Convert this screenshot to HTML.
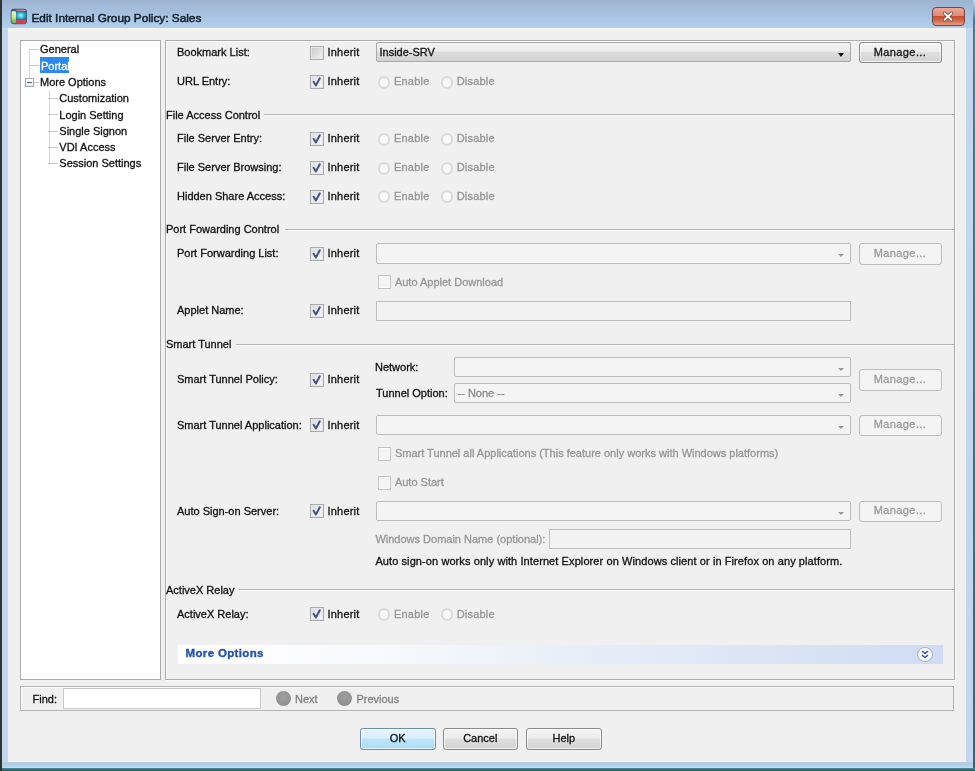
<!DOCTYPE html><html><head><meta charset="utf-8"><style>
html,body{margin:0;padding:0}
body{width:975px;height:771px;position:relative;overflow:hidden;background:#c2d7ee;font-family:"Liberation Sans",sans-serif}
div{position:absolute;box-sizing:border-box}
.t,.td,.tb{font-size:11px;line-height:13px;white-space:nowrap;color:#111;-webkit-text-stroke:0.3px currentColor}
.td{color:#969696}
.cb{width:13.5px;height:13.5px;border:1px solid #ababab;background:linear-gradient(135deg,#d8dde6,#f6f9fd);box-shadow:inset 0 0 0 1px #e6e6e6}
.cbu{background:linear-gradient(135deg,#c6c6c6,#f6f6f6);border-color:#b0b0b0}
.cbd{border-color:#c4c4c4;background:#f4f4f4;box-shadow:inset 0 0 0 1px #fafafa}
.rd{width:12.5px;height:12.5px;border-radius:50%;border:2px solid #dadada;background:radial-gradient(circle at 50% 55%,#fbfbfb 0,#f6f6f6 60%,#ececec 100%)}
.cmb{border:1px solid #a9a9a9;border-radius:2px;background:linear-gradient(#f3f3f3,#ececec 45%,#dddddd 50%,#d2d2d2)}
.cmbd{border:1px solid #bdbdbd;border-radius:2px;background:#f4f4f4}
.ct,.ctd{position:absolute;left:3px;top:3px;font-size:11px;line-height:13px;color:#111;white-space:nowrap;-webkit-text-stroke:0.3px currentColor}
.ctd{color:#8a8a8a}
.arr{right:6px;top:10px;width:0;height:0;border-left:3.5px solid transparent;border-right:3.5px solid transparent;border-top:4px solid #111}
.arrd{right:6px;top:10px;width:0;height:0;border-left:3px solid transparent;border-right:3px solid transparent;border-top:3px solid #9a9a9a}
.tf{border:1px solid #bfbfbf;background:#f2f2f2}
.btn,.btnd,.ok{border:1px solid #8a8a8a;border-radius:3px;background:linear-gradient(#f4f4f4,#ececec 45%,#dedede 50%,#d3d3d3);box-shadow:inset 0 0 0 1px rgba(255,255,255,.7)}
.btnd{border-color:#bdbdbd;background:#f4f4f4;box-shadow:none}
.ok{border-color:#6a8fb0;background:linear-gradient(#e8f5fd,#d8effc 45%,#bfe5fb 50%,#a9daf5)}
.btn span,.btnd span,.ok span{position:absolute;left:0;right:0;top:50%;margin-top:-7px;text-align:center;font-size:11px;line-height:13px;color:#111;-webkit-text-stroke:0.3px currentColor}
.btnd span{color:#9a9a9a}
.sep{height:2px;border-top:1px solid #b4b4b4;border-bottom:1px solid #fafafa}
.tree{background:#fff;border:1px solid #ababab}
.tl{background:#c6c6c6}
</style></head><body><div style="left:0;top:0;width:975px;height:771px;filter:blur(0.4px)">
<div style="left:0;top:0;width:975px;height:28px;background:linear-gradient(#9db3d0,#a8c4e2 57%,#b0d0ee)"></div>
<div style="left:0;top:0;width:2px;height:771px;background:#2e3336"></div>
<div style="left:973px;top:0;width:2px;height:771px;background:linear-gradient(#c8d8e8,#4a7c84 20px,#47707a 50%,#4a5c6a)"></div>
<div style="left:2px;top:762px;width:971px;height:6px;background:linear-gradient(#b9cce0,#b0cde8 50%,#bde0f6)"></div>
<div style="left:2px;top:768px;width:973px;height:3px;background:linear-gradient(#4f8c98,#24525e)"></div>
<div style="left:8px;top:28px;width:958px;height:734px;background:linear-gradient(#f4f2ef,#f0f0f0 4px)"></div>
<svg style="position:absolute;left:10px;top:8px" width="18" height="17" viewBox="0 0 18 17">
<defs><radialGradient id="cy" cx="0.45" cy="0.45" r="0.6"><stop offset="0" stop-color="#9af4ff"/><stop offset="0.5" stop-color="#3cc0e0"/><stop offset="1" stop-color="#127a98"/></radialGradient>
<linearGradient id="gr" x1="0" y1="0" x2="0" y2="1"><stop offset="0" stop-color="#e6f0d8"/><stop offset="0.5" stop-color="#c8ec88"/><stop offset="1" stop-color="#6aa04a"/></linearGradient></defs>
<rect x="0.7" y="0.7" width="16.3" height="15.6" rx="3" fill="#505a78"/>
<rect x="1.6" y="3.2" width="4.6" height="12" rx="1.2" fill="url(#gr)"/>
<rect x="6.2" y="3.8" width="10" height="8" fill="url(#cy)"/>
<rect x="6.2" y="11.8" width="9.8" height="4" rx="1" fill="#d2404c"/>
<rect x="6.5" y="1.8" width="9" height="1.2" fill="#c88898"/>
</svg>
<div class="t" style="left:31.5px;top:10.5px;font-size:11.8px;line-height:14px;color:#141e2c;-webkit-text-stroke:0.5px #141e2c">Edit Internal Group Policy: Sales</div>
<div style="left:932px;top:7px;width:33px;height:19px;border:1px solid #6e4a4a;border-radius:4px;background:linear-gradient(#eaa898,#e08a78 45%,#c9502e 50%,#d66a4a 75%,#e89a80)"></div>
<svg style="position:absolute;left:941px;top:10px" width="14" height="13" viewBox="0 0 14 13"><path d="M3.5 3.2 L10.5 9.8 M10.5 3.2 L3.5 9.8" stroke="#6a3a30" stroke-width="3.4" stroke-linecap="round"/><path d="M3.5 3.2 L10.5 9.8 M10.5 3.2 L3.5 9.8" stroke="#ffffff" stroke-width="2" stroke-linecap="round"/></svg>
<div class="tree" style="left:20px;top:40px;width:141px;height:640px;"></div>
<div class="tl" style="left:29px;top:49px;width:1.2px;height:29px;background:#d6d6d6"></div>
<div class="tl" style="left:29px;top:49px;width:10px;height:1px"></div>
<div class="tl" style="left:29px;top:65px;width:10px;height:1px"></div>
<div style="left:25px;top:78px;width:9px;height:9px;border:1px solid #a6acb4;background:linear-gradient(#fff,#e4e6ea)"></div>
<div style="left:27px;top:82px;width:5px;height:1px;background:#5a6272"></div>
<div class="tl" style="left:34px;top:82px;width:5px;height:1px"></div>
<div class="t" style="left:40px;top:43.0px;">General</div>
<div style="left:40px;top:57px;width:29px;height:16px;background:#2a88ee"></div>
<div class="t" style="left:41px;top:59.5px;color:#fff">Portal</div>
<div class="t" style="left:40px;top:76.0px;">More Options</div>
<div class="tl" style="left:48.5px;top:90px;width:1.2px;height:75px;background:#d6d6d6"></div>
<div class="tl" style="left:48px;top:98px;width:10px;height:1px"></div>
<div class="t" style="left:59.3px;top:92.3px;">Customization</div>
<div class="tl" style="left:48px;top:114px;width:10px;height:1px"></div>
<div class="t" style="left:59.3px;top:108.5px;">Login Setting</div>
<div class="tl" style="left:48px;top:131px;width:10px;height:1px"></div>
<div class="t" style="left:59.3px;top:124.7px;">Single Signon</div>
<div class="tl" style="left:48px;top:147px;width:10px;height:1px"></div>
<div class="t" style="left:59.3px;top:140.9px;">VDI Access</div>
<div class="tl" style="left:48px;top:163px;width:10px;height:1px"></div>
<div class="t" style="left:59.3px;top:157.1px;">Session Settings</div>
<div class="" style="left:165px;top:40px;width:790px;height:640px;border:1px solid #acacac;box-shadow:inset 1px 1px 0 #fcfcfc,1px 1px 0 #fafafa"></div>
<div class="t" style="left:177px;top:46.4px;">Bookmark List:</div>
<div class="cb cbu" style="left:310px;top:46px"></div>
<div class="t" style="left:327.5px;top:46.4px;letter-spacing:0.2px">Inherit</div>
<div class="cmb" style="left:375.5px;top:42px;width:475.5px;height:20px;"><span class="ct">Inside-SRV</span><div class="arr"></div></div>
<div class="btn" style="left:858.5px;top:42px;width:83.0px;height:21px;"><span style="letter-spacing:0.4px">Manage...</span></div>
<div class="t" style="left:177px;top:75.0px;">URL Entry:</div>
<div class="cb" style="left:310px;top:75px"><svg width="13" height="13" viewBox="0 0 13 13" style="position:absolute;left:-1px;top:-1px"><path d="M3.6 6.8 L5.9 10.4 L9.8 3.3" fill="none" stroke="#48527e" stroke-width="2" stroke-linecap="round" stroke-linejoin="round"/></svg></div>
<div class="t" style="left:327.5px;top:75.0px;letter-spacing:0.2px">Inherit</div>
<div class="rd" style="left:377.5px;top:76px"></div>
<div class="td" style="left:394px;top:75.0px;letter-spacing:0.2px">Enable</div>
<div class="rd" style="left:440.5px;top:76px"></div>
<div class="td" style="left:456.7px;top:75.0px;letter-spacing:0.2px">Disable</div>
<div class="t" style="left:166px;top:109.2px;">File Access Control</div>
<div class="sep" style="left:264px;top:114px;width:690px"></div>
<div class="t" style="left:177px;top:132.3px;">File Server Entry:</div>
<div class="cb" style="left:310px;top:132px"><svg width="13" height="13" viewBox="0 0 13 13" style="position:absolute;left:-1px;top:-1px"><path d="M3.6 6.8 L5.9 10.4 L9.8 3.3" fill="none" stroke="#48527e" stroke-width="2" stroke-linecap="round" stroke-linejoin="round"/></svg></div>
<div class="t" style="left:327.5px;top:132.3px;letter-spacing:0.2px">Inherit</div>
<div class="rd" style="left:377.5px;top:133px"></div>
<div class="td" style="left:394px;top:132.3px;letter-spacing:0.2px">Enable</div>
<div class="rd" style="left:440.5px;top:133px"></div>
<div class="td" style="left:456.7px;top:132.3px;letter-spacing:0.2px">Disable</div>
<div class="t" style="left:177px;top:161.0px;">File Server Browsing:</div>
<div class="cb" style="left:310px;top:161px"><svg width="13" height="13" viewBox="0 0 13 13" style="position:absolute;left:-1px;top:-1px"><path d="M3.6 6.8 L5.9 10.4 L9.8 3.3" fill="none" stroke="#48527e" stroke-width="2" stroke-linecap="round" stroke-linejoin="round"/></svg></div>
<div class="t" style="left:327.5px;top:161.0px;letter-spacing:0.2px">Inherit</div>
<div class="rd" style="left:377.5px;top:162px"></div>
<div class="td" style="left:394px;top:161.0px;letter-spacing:0.2px">Enable</div>
<div class="rd" style="left:440.5px;top:162px"></div>
<div class="td" style="left:456.7px;top:161.0px;letter-spacing:0.2px">Disable</div>
<div class="t" style="left:177px;top:190.0px;">Hidden Share Access:</div>
<div class="cb" style="left:310px;top:190px"><svg width="13" height="13" viewBox="0 0 13 13" style="position:absolute;left:-1px;top:-1px"><path d="M3.6 6.8 L5.9 10.4 L9.8 3.3" fill="none" stroke="#48527e" stroke-width="2" stroke-linecap="round" stroke-linejoin="round"/></svg></div>
<div class="t" style="left:327.5px;top:190.0px;letter-spacing:0.2px">Inherit</div>
<div class="rd" style="left:377.5px;top:190px"></div>
<div class="td" style="left:394px;top:190.0px;letter-spacing:0.2px">Enable</div>
<div class="rd" style="left:440.5px;top:190px"></div>
<div class="td" style="left:456.7px;top:190.0px;letter-spacing:0.2px">Disable</div>
<div class="t" style="left:166px;top:223.0px;">Port Fowarding Control</div>
<div class="sep" style="left:285px;top:229px;width:669px"></div>
<div class="t" style="left:177px;top:247.4px;">Port Forwarding List:</div>
<div class="cb" style="left:310px;top:247px"><svg width="13" height="13" viewBox="0 0 13 13" style="position:absolute;left:-1px;top:-1px"><path d="M3.6 6.8 L5.9 10.4 L9.8 3.3" fill="none" stroke="#48527e" stroke-width="2" stroke-linecap="round" stroke-linejoin="round"/></svg></div>
<div class="t" style="left:327.5px;top:247.4px;letter-spacing:0.2px">Inherit</div>
<div class="cmbd" style="left:375.5px;top:243px;width:475.5px;height:20.5px;"><div class="arrd"></div></div>
<div class="btnd" style="left:858.5px;top:243px;width:83.0px;height:22px;"><span style="letter-spacing:0.4px">Manage...</span></div>
<div class="cb cbd" style="left:377.5px;top:275px"></div>
<div class="td" style="left:394.9px;top:276.0px;">Auto Applet Download</div>
<div class="t" style="left:177px;top:304.3px;">Applet Name:</div>
<div class="cb" style="left:310px;top:304px"><svg width="13" height="13" viewBox="0 0 13 13" style="position:absolute;left:-1px;top:-1px"><path d="M3.6 6.8 L5.9 10.4 L9.8 3.3" fill="none" stroke="#48527e" stroke-width="2" stroke-linecap="round" stroke-linejoin="round"/></svg></div>
<div class="t" style="left:327.5px;top:304.3px;letter-spacing:0.2px">Inherit</div>
<div class="tf" style="left:375.5px;top:300.5px;width:475.5px;height:20.5px;"></div>
<div class="t" style="left:166px;top:338.4px;">Smart Tunnel</div>
<div class="sep" style="left:236px;top:344px;width:718px"></div>
<div class="t" style="left:177px;top:373.4px;">Smart Tunnel Policy:</div>
<div class="cb" style="left:310px;top:373px"><svg width="13" height="13" viewBox="0 0 13 13" style="position:absolute;left:-1px;top:-1px"><path d="M3.6 6.8 L5.9 10.4 L9.8 3.3" fill="none" stroke="#48527e" stroke-width="2" stroke-linecap="round" stroke-linejoin="round"/></svg></div>
<div class="t" style="left:327.5px;top:373.4px;letter-spacing:0.2px">Inherit</div>
<div class="t" style="left:375px;top:361.0px;">Network:</div>
<div class="cmbd" style="left:453.5px;top:357px;width:397.5px;height:20px;"><div class="arrd"></div></div>
<div class="t" style="left:376px;top:386.8px;">Tunnel Option:</div>
<div class="cmbd" style="left:453.5px;top:383px;width:397.5px;height:20px;"><span class="ctd">-- None --</span><div class="arrd"></div></div>
<div class="btnd" style="left:858.5px;top:369px;width:83.0px;height:22px;"><span style="letter-spacing:0.4px">Manage...</span></div>
<div class="t" style="left:177px;top:418.5px;">Smart Tunnel Application:</div>
<div class="cb" style="left:310px;top:418px"><svg width="13" height="13" viewBox="0 0 13 13" style="position:absolute;left:-1px;top:-1px"><path d="M3.6 6.8 L5.9 10.4 L9.8 3.3" fill="none" stroke="#48527e" stroke-width="2" stroke-linecap="round" stroke-linejoin="round"/></svg></div>
<div class="t" style="left:327.5px;top:418.5px;letter-spacing:0.2px">Inherit</div>
<div class="cmbd" style="left:375.5px;top:414.5px;width:475.5px;height:20.0px;"><div class="arrd"></div></div>
<div class="btnd" style="left:858.5px;top:414.5px;width:83.0px;height:21.5px;"><span style="letter-spacing:0.4px">Manage...</span></div>
<div class="cb cbd" style="left:377.5px;top:447px"></div>
<div class="td" style="left:394.9px;top:447.4px;">Smart Tunnel all Applications (This feature only works with Windows platforms)</div>
<div class="cb cbd" style="left:377.5px;top:476px"></div>
<div class="td" style="left:394.9px;top:476.2px;">Auto Start</div>
<div class="t" style="left:177px;top:504.7px;">Auto Sign-on Server:</div>
<div class="cb" style="left:310px;top:504px"><svg width="13" height="13" viewBox="0 0 13 13" style="position:absolute;left:-1px;top:-1px"><path d="M3.6 6.8 L5.9 10.4 L9.8 3.3" fill="none" stroke="#48527e" stroke-width="2" stroke-linecap="round" stroke-linejoin="round"/></svg></div>
<div class="t" style="left:327.5px;top:504.7px;letter-spacing:0.2px">Inherit</div>
<div class="cmbd" style="left:375.5px;top:500.5px;width:475.5px;height:20.0px;"><div class="arrd"></div></div>
<div class="btnd" style="left:858.5px;top:501px;width:83.0px;height:20.5px;"><span style="letter-spacing:0.4px">Manage...</span></div>
<div class="td" style="left:375.4px;top:532.6px;">Windows Domain Name (optional):</div>
<div class="tf" style="left:549px;top:529px;width:302px;height:20px;"></div>
<div class="t" style="left:375.4px;top:554.5px;letter-spacing:0.09px">Auto sign-on works only with Internet Explorer on Windows client or in Firefox on any platform.</div>
<div class="t" style="left:166px;top:583.8px;">ActiveX Relay</div>
<div class="sep" style="left:239px;top:589px;width:715px"></div>
<div class="t" style="left:177px;top:607.6px;">ActiveX Relay:</div>
<div class="cb" style="left:310px;top:607px"><svg width="13" height="13" viewBox="0 0 13 13" style="position:absolute;left:-1px;top:-1px"><path d="M3.6 6.8 L5.9 10.4 L9.8 3.3" fill="none" stroke="#48527e" stroke-width="2" stroke-linecap="round" stroke-linejoin="round"/></svg></div>
<div class="t" style="left:327.5px;top:607.6px;letter-spacing:0.2px">Inherit</div>
<div class="rd" style="left:377.5px;top:608px"></div>
<div class="td" style="left:394px;top:607.6px;letter-spacing:0.2px">Enable</div>
<div class="rd" style="left:440.5px;top:608px"></div>
<div class="td" style="left:456.7px;top:607.6px;letter-spacing:0.2px">Disable</div>
<div style="left:178px;top:645px;width:765px;height:19px;background:linear-gradient(90deg,#ffffff 0,#f9fafd 25%,#e6edf8 55%,#cfdcf3 100%)"></div>
<div class="t" style="left:185.5px;top:646.8px;font-size:11.5px;font-weight:bold;color:#2352a8;letter-spacing:0.35px;-webkit-text-stroke:0.35px #2352a8">More Options</div>
<div style="left:917px;top:647px;width:16px;height:15px;border-radius:50%;background:#fbfcff;border:1px solid #9fb6da"></div>
<svg style="position:absolute;left:917px;top:647px" width="16" height="15" viewBox="0 0 16 15"><path d="M5 4 L8 6.5 L11 4 M5 8 L8 10.5 L11 8" fill="none" stroke="#3558a8" stroke-width="1.6"/></svg>
<div class="" style="left:20px;top:686px;width:934px;height:25px;border:1px solid #b4b4b4;box-shadow:inset 1px 1px 0 #fafafa"></div>
<div class="t" style="left:32.6px;top:692.8px;">Find:</div>
<div class="" style="left:63px;top:688px;width:198px;height:21px;background:#fff;border:1px solid #c9c9c9"></div>
<div style="left:276px;top:691px;width:15px;height:15px;border-radius:50%;background:radial-gradient(circle at 50% 40%,#a0a0a0,#8a8a8a)"></div>
<div class="td" style="left:295px;top:692.7px;color:#808080">Next</div>
<div style="left:337px;top:691px;width:15px;height:15px;border-radius:50%;background:radial-gradient(circle at 50% 40%,#a0a0a0,#8a8a8a)"></div>
<div class="td" style="left:356.4px;top:692.7px;color:#808080">Previous</div>
<div class="ok" style="left:360px;top:727.5px;width:75.5px;height:22.5px;"><span style="letter-spacing:0px">OK</span></div>
<div class="btn" style="left:442.5px;top:727.5px;width:75.5px;height:22.5px;"><span style="letter-spacing:0px">Cancel</span></div>
<div class="btn" style="left:526px;top:727.5px;width:75.5px;height:22.5px;"><span style="letter-spacing:0px">Help</span></div>
</div></body></html>
